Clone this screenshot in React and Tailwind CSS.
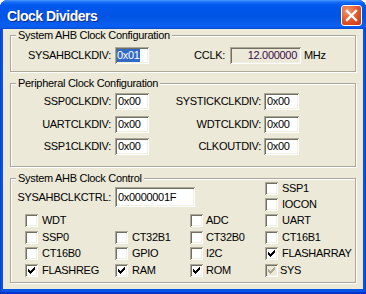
import React from 'react';

const sunken =
  "shadow-[inset_1px_1px_0_#aca899,inset_-1px_-1px_0_#ffffff,inset_2px_2px_0_#716f64,inset_-2px_-2px_0_#f1efe2]";

const checkRows = [
  [9, 3, 1], [8, 4, 2], [3, 5, 1], [7, 5, 3], [3, 6, 2], [6, 6, 3], [3, 7, 5], [4, 8, 3], [5, 9, 1],
];

function CheckMark({ color }) {
  return (
    <svg width="13" height="13" viewBox="0 0 13 13" shapeRendering="crispEdges">
      {checkRows.map(([x, y, w], i) => (
        <rect key={i} x={x} y={y} width={w} height="1" fill={color} />
      ))}
    </svg>
  );
}

function Check({ label, checked, disabled, gap = "ml-[4px]" }) {
  return (
    <div className="flex h-[13px] items-center">
      <div className={`h-[13px] w-[13px] shrink-0 ${disabled ? "bg-[#ece9d8]" : "bg-white"} ${sunken}`}>
        {checked && <CheckMark color={disabled ? "#aca899" : "#000000"} />}
      </div>
      <span className={`${gap} whitespace-nowrap leading-[13px]`}>{label}</span>
    </div>
  );
}

function Field({ className, children }) {
  return (
    <div className={`flex shrink-0 items-center overflow-hidden whitespace-nowrap ${sunken} ${className}`}>
      {children}
    </div>
  );
}

function Group({ title, className = "", children }) {
  return (
    <div className={`border border-[#aca899] shadow-[1px_1px_0_#ffffff,inset_1px_1px_0_#ffffff] ${className}`}>
      <div className="-mt-[5px] ml-[5px] w-fit bg-[#ece9d8] px-[2px] leading-[8px] whitespace-nowrap">
        {title}
      </div>
      {children}
    </div>
  );
}

function DivRow({ label, value, rightLabel, rightValue, className = "" }) {
  return (
    <div className={`flex h-[17px] ${className}`}>
      <div className="w-[100px] text-right leading-[17px]">{label}</div>
      <Field className="ml-[4px] h-[17px] w-[34px] bg-white pl-[3px]">{value}</Field>
      <div className="w-[112px] text-right leading-[17px]">{rightLabel}</div>
      <Field className="ml-[3px] h-[17px] w-[35px] bg-white pl-[3px]">{rightValue}</Field>
    </div>
  );
}

export default function App() {
  return (
    <div className="flex h-[294px] w-[366px] flex-col rounded-t-[8px] bg-[#0555e5] font-['Liberation_Sans',Arial,sans-serif] text-[11px] tracking-[-0.3px] text-black shadow-[inset_0_-2px_0_#0a32c8,inset_1px_0_0_#0a3fd0,inset_-1px_0_0_#0a3fd0]">
      <div className="flex h-[29px] shrink-0 justify-between rounded-t-[8px] bg-[linear-gradient(to_bottom,#4a9bff_0px,#1a6ff5_2px,#0058ee_5px,#0054e3_16px,#0a5ded_24px,#0a5ff0_27px,#0348d0_29px)] pl-[7px] pr-[4px]">
        <span className="pt-[8px] text-[14px] font-bold leading-[16px] tracking-[-0.5px] text-white [text-shadow:1px_1px_0_#0b2a8a]">
          Clock Dividers
        </span>
        <div className="mt-[5px] flex h-[21px] w-[21px] items-center justify-center rounded-[3px] border border-white bg-[radial-gradient(circle_at_30%_25%,#f3946c,#de4f24_60%,#c33a15)]">
          <svg width="19" height="19" viewBox="0 0 19 19">
            <path d="M5 5 L14 14 M14 5 L5 14" stroke="#ffffff" strokeWidth="2.3" strokeLinecap="square" />
          </svg>
        </div>
      </div>

      <div className="mx-[3px] mb-[5px] flex-1 bg-[#ece9d8] px-[7px]">
        <Group title="System AHB Clock Configuration" className="mt-[6px]">
          <div className="mt-[8px] flex pb-[7px]">
            <div className="w-[100px] text-right leading-[17px]">SYSAHBCLKDIV:</div>
            <Field className="ml-[4px] h-[17px] w-[34px] bg-white pl-[2px]">
              <span className="bg-[#316ac5] leading-[13px] text-white">0x01</span>
            </Field>
            <div className="w-[76px] text-right leading-[17px]">CCLK:</div>
            <Field className="ml-[5px] h-[17px] w-[71px] justify-end bg-[#ece9d8] pr-[4px] text-[#3a0a4a]">
              12.000000
            </Field>
            <div className="ml-[3px] leading-[17px]">MHz</div>
          </div>
        </Group>

        <Group title="Peripheral Clock Configuration" className="mt-[11px]">
          <div className="mt-[6px] pb-[11px]">
            <DivRow label="SSP0CLKDIV:" value="0x00" rightLabel="SYSTICKCLKDIV:" rightValue="0x00" />
            <DivRow label="UARTCLKDIV:" value="0x00" rightLabel="WDTCLKDIV:" rightValue="0x00" className="mt-[6px]" />
            <DivRow label="SSP1CLKDIV:" value="0x00" rightLabel="CLKOUTDIV:" rightValue="0x00" className="mt-[5px]" />
          </div>
        </Group>

        <Group title="System AHB Clock Control" className="mt-[11px]">
          <div className="flex pb-[5px]">
            <div className="w-[254px] shrink-0">
              <div className="mt-[5px] flex">
                <div className="w-[100px] text-right leading-[20px]">SYSAHBCLKCTRL:</div>
                <Field className="ml-[4px] h-[20px] w-[80px] bg-white pl-[3px]">0x0000001F</Field>
              </div>
              <div className="ml-[14px] mt-[7px]">
                <div className="grid grid-cols-[90px_75px_75px]">
                  <Check label="WDT" />
                  <div />
                  <Check label="ADC" gap="ml-[3px]" />
                </div>
                <div className="mt-[4px] grid grid-cols-[90px_75px_75px]">
                  <Check label="SSP0" />
                  <Check label="CT32B1" />
                  <Check label="CT32B0" gap="ml-[3px]" />
                </div>
                <div className="mt-[3px] grid grid-cols-[90px_75px_75px]">
                  <Check label="CT16B0" />
                  <Check label="GPIO" />
                  <Check label="I2C" gap="ml-[3px]" />
                </div>
                <div className="mt-[4px] grid grid-cols-[90px_75px_75px]">
                  <Check label="FLASHREG" checked />
                  <Check label="RAM" checked />
                  <Check label="ROM" checked gap="ml-[3px]" />
                </div>
              </div>
            </div>
            <div className="flex flex-col">
              <Check label="SSP1" />
              <div className="mt-[3px]"><Check label="IOCON" /></div>
              <div className="mt-[3px]"><Check label="UART" /></div>
              <div className="mt-[4px]"><Check label="CT16B1" /></div>
              <div className="mt-[3px]"><Check label="FLASHARRAY" checked /></div>
              <div className="mt-[4px]"><Check label="SYS" checked disabled gap="ml-[2px]" /></div>
            </div>
          </div>
        </Group>
      </div>
    </div>
  );
}
